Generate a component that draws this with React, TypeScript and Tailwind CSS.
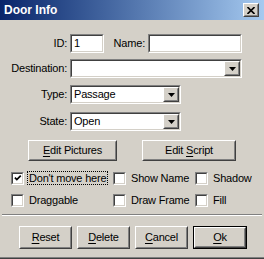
import React from "react";

function Sunken({ className = "", children }: { className?: string; children?: React.ReactNode }) {
  return (
    <div className={`border border-t-[#808080] border-l-[#808080] border-b-white border-r-white ${className}`}>
      <div className="h-full w-full border border-t-[#404040] border-l-[#404040] border-b-[#d4d0c8] border-r-[#d4d0c8] bg-white flex items-center">
        {children}
      </div>
    </div>
  );
}

function Raised({ className = "", children }: { className?: string; children?: React.ReactNode }) {
  return (
    <div className={`border border-t-white border-l-white border-b-[#404040] border-r-[#404040] bg-[#d4d0c8] ${className}`}>
      <div className="h-full w-full border border-t-[#d4d0c8] border-l-[#d4d0c8] border-b-[#808080] border-r-[#808080] flex items-center justify-center">
        {children}
      </div>
    </div>
  );
}

function Arrow() {
  return (
    <svg width="7" height="4" viewBox="0 0 7 4">
      <path d="M0 0 H7 L3.5 4 Z" fill="#000" />
    </svg>
  );
}

function Combo({ className = "", value }: { className?: string; value?: string }) {
  return (
    <Sunken className={className}>
      <div className="flex-1 pl-[2px] leading-none">{value}</div>
      <Raised className="w-[16px] h-full">
        <Arrow />
      </Raised>
    </Sunken>
  );
}

function Check({ checked }: { checked?: boolean }) {
  return (
    <Sunken className="w-[13px] h-[13px] shrink-0">
      {checked && (
        <svg width="9" height="9" viewBox="0 0 9 9" className="ml-[1px]">
          <path d="M1 3.5 L3.2 5.8 L7.6 1.3" stroke="#000" strokeWidth="1.9" fill="none" />
        </svg>
      )}
    </Sunken>
  );
}

function U({ children }: { children: React.ReactNode }) {
  return <span className="underline underline-offset-[2px]">{children}</span>;
}

export default function App() {
  return (
    <div className="w-[264px] h-[259px] bg-[#d4d0c8] flex flex-col overflow-hidden text-[11px] tracking-[-0.2px] text-black font-['Liberation_Sans',Arial,sans-serif]">
      {/* Title bar */}
      <div className="h-[20px] shrink-0 flex items-center justify-between pl-[4px] pr-[5px] bg-linear-to-r from-[#0a246a] to-[#a6caf0]">
        <span className="text-white font-bold text-[12px] tracking-normal leading-none">Door Info</span>
        <Raised className="w-[16px] h-[14px]">
          <svg width="8" height="7" viewBox="0 0 8 7">
            <path d="M0.5 0 L7.5 7 M7.5 0 L0.5 7" stroke="#000" strokeWidth="1.6" />
          </svg>
        </Raised>
      </div>

      {/* ID / Name */}
      <div className="mt-[14px] flex items-center h-[19px]">
        <div className="w-[67px] text-right">ID:</div>
        <Sunken className="ml-[3px] w-[34px] h-[19px]">
          <span className="pl-[2px] leading-none">1</span>
        </Sunken>
        <div className="w-[41px] text-right">Name:</div>
        <Sunken className="ml-[3px] w-[94px] h-[19px]" />
      </div>

      {/* Destination */}
      <div className="mt-[6px] flex items-center h-[19px]">
        <div className="w-[67px] text-right">Destination:</div>
        <Combo className="ml-[3px] w-[172px] h-[19px]" />
      </div>

      {/* Type */}
      <div className="mt-[7px] flex items-center h-[19px]">
        <div className="w-[67px] text-right">Type:</div>
        <Combo className="ml-[3px] w-[111px] h-[19px]" value="Passage" />
      </div>

      {/* State */}
      <div className="mt-[8px] flex items-center h-[19px]">
        <div className="w-[67px] text-right">State:</div>
        <Combo className="ml-[3px] w-[111px] h-[19px]" value="Open" />
      </div>

      {/* Edit buttons */}
      <div className="mt-[9px] flex h-[21px] pl-[28px]">
        <Raised className="w-[89px] h-[21px]">
          <span>
            <U>E</U>dit Pictures
          </span>
        </Raised>
        <Raised className="ml-[25px] w-[94px] h-[21px]">
          <span>
            Edit <U>S</U>cript
          </span>
        </Raised>
      </div>

      {/* Checkbox row 1 */}
      <div className="mt-[10px] flex items-center h-[14px] pl-[11px]">
        <div className="w-[102px] flex items-center">
          <Check checked />
          <span className="ml-[3px] border border-dotted border-black px-[1px] h-[14px] flex items-center">Don't move here</span>
        </div>
        <div className="w-[82px] flex items-center">
          <Check />
          <span className="ml-[5px]">Show Name</span>
        </div>
        <div className="flex items-center">
          <Check />
          <span className="ml-[5px]">Shadow</span>
        </div>
      </div>

      {/* Checkbox row 2 */}
      <div className="mt-[8px] flex items-center h-[14px] pl-[11px]">
        <div className="w-[102px] flex items-center">
          <Check />
          <span className="ml-[5px]">Draggable</span>
        </div>
        <div className="w-[82px] flex items-center">
          <Check />
          <span className="ml-[5px]">Draw Frame</span>
        </div>
        <div className="flex items-center">
          <Check />
          <span className="ml-[5px]">Fill</span>
        </div>
      </div>

      {/* Separator */}
      <div className="mt-[7px] mx-[2px] h-[2px] border-t border-t-[#808080] border-b border-b-white" />

      {/* Bottom buttons */}
      <div className="mt-[10px] flex pl-[19px] gap-[5px] h-[23px]">
        <Raised className="w-[53px] h-[23px]">
          <span>
            <U>R</U>eset
          </span>
        </Raised>
        <Raised className="w-[53px] h-[23px]">
          <span>
            <U>D</U>elete
          </span>
        </Raised>
        <Raised className="w-[53px] h-[23px]">
          <span>
            <U>C</U>ancel
          </span>
        </Raised>
        <div className="w-[54px] h-[23px] border border-black">
          <Raised className="w-full h-full">
            <span>
              <U>O</U>k
            </span>
          </Raised>
        </div>
      </div>

      <div className="flex-1" />
      <div className="h-[1px] bg-[#808080]" />
      <div className="h-[1px] bg-[#404040]" />
    </div>
  );
}
